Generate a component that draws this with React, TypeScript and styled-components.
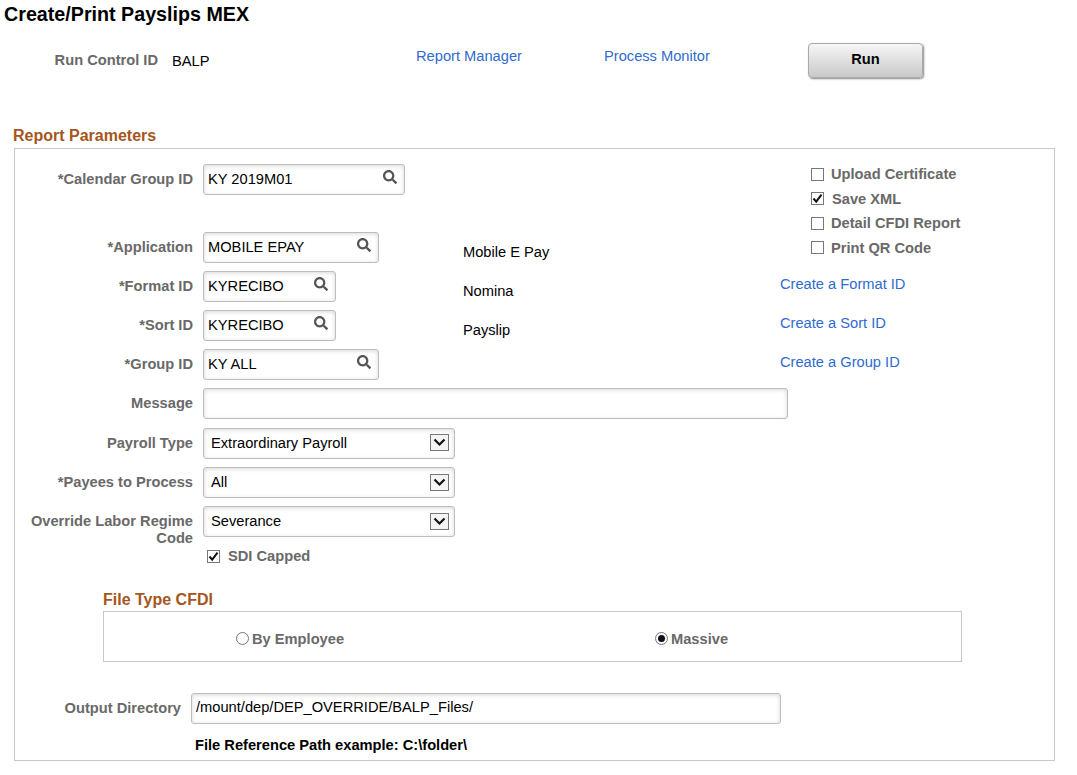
import React, { FC } from "react";
import styled, { createGlobalStyle } from "styled-components";
import { FaSearch } from "react-icons/fa";

const GlobalStyle = createGlobalStyle`
  html, body {
    margin: 0;
    padding: 0;
    background: #ffffff;
  }
  body {
    font-family: "Liberation Sans", Arial, sans-serif;
    font-size: 14.67px;
    color: #000000;
  }
`;

const Page = styled.div`
  width: 1077px;
  height: 775px;
  overflow: hidden;
  padding-top: 4px;
  box-sizing: border-box;
`;

const Title = styled.h1`
  margin: 0 0 19px 4px;
  font-size: 19.7px;
  line-height: 20px;
  font-weight: bold;
`;

const Header = styled.div`
  display: grid;
  grid-template-columns: 158px 258px 188px 204px 115px;
  align-items: center;
  height: 35px;
`;

const HeaderValue = styled.span`
  padding-left: 14px;
`;

const Label = styled.label<{ $top?: boolean }>`
  grid-column: 1;
  font-weight: bold;
  color: #696969;
  text-align: right;
  line-height: 17px;
  ${(p) => p.$top && "align-self: start; padding-top: 7px;"}
`;

const Link = styled.a<{ $up: number }>`
  color: #2f6bce;
  white-space: nowrap;
  padding-bottom: ${(p) => p.$up}px;
`;

const RunButton = styled.button`
  height: 35px;
  width: 115px;
  padding: 0 0 3px;
  border: 1px solid #a9a9a9;
  border-radius: 4px;
  background: linear-gradient(#f6f6f6, #c9c9c9);
  box-shadow: 1px 1px 2px #8a8a8a;
  font: bold 14.67px "Liberation Sans", Arial, sans-serif;
  color: #000000;
`;

const SectionTitle = styled.h2<{ $left: number; $top: number; $bottom: number }>`
  margin: ${(p) => p.$top}px 0 ${(p) => p.$bottom}px ${(p) => p.$left}px;
  font-size: 16px;
  line-height: 18px;
  font-weight: bold;
  color: #a5561c;
`;

const Panel = styled.section`
  margin-left: 14px;
  width: 1041px;
  box-sizing: border-box;
  border: 1px solid #c8c8c8;
  padding: 15px 0 6px;
`;

const Form = styled.div`
  display: grid;
  grid-template-columns: 188px 260px 317px 1fr;
  grid-template-rows: 60px repeat(5, 31px) 32px 31px 31px;
  row-gap: 8px;
  align-items: center;

  & > label {
    padding-right: 10px;
  }
`;

const Field = styled.div<{ $width: number; $select?: boolean }>`
  display: flex;
  align-items: center;
  justify-content: space-between;
  box-sizing: border-box;
  width: ${(p) => p.$width}px;
  height: 31px;
  padding: 0 ${(p) => (p.$select ? 5 : 7)}px ${(p) => (p.$select ? 1 : 2)}px ${(p) => (p.$select ? 7 : 4)}px;
  border: 1px solid #bdbdbd;
  border-radius: 3px;
  background: #ffffff;
  box-shadow: inset 0 1px 4px rgba(0, 0, 0, 0.16);
  white-space: nowrap;
`;

const FirstRowCell = styled.div`
  align-self: start;
`;

const Description = styled.div`
  padding-top: 9px;
`;

const SearchIcon = styled(FaSearch)`
  width: 14px;
  height: 14px;
  margin-bottom: 4px;
  color: #555555;
`;

const ArrowBox = styled.span`
  display: flex;
  align-items: center;
  justify-content: center;
  width: 19px;
  height: 17px;
  box-sizing: border-box;
  border: 1px solid #777777;
  background: #f4f4f4;
`;

const CheckList = styled.div`
  grid-column: 4;
  grid-row: 1 / span 2;
  align-self: start;
  margin-top: -2px;
  padding-left: 31px;
`;

const CheckRow = styled.div<{ $inset?: number; $checked?: boolean }>`
  display: flex;
  align-items: center;
  gap: ${(p) => (p.$checked ? 8 : 7)}px;
  height: 24.5px;
  padding-left: ${(p) => p.$inset ?? 0}px;
`;

const BoxMark = styled.span`
  display: flex;
  align-items: center;
  justify-content: center;
  flex: none;
  width: 13px;
  height: 13px;
  box-sizing: border-box;
  border: 1px solid #777777;
  background: #ffffff;
`;

const CheckText = styled.span`
  font-weight: bold;
  color: #696969;
`;

const SdiCell = styled.div`
  grid-column: 2;
  margin-top: -1px;
`;

const FileType = styled.div`
  margin: 22px 0 31px 88px;
`;

const RadioBox = styled.div`
  display: grid;
  grid-template-columns: 419px 1fr;
  align-items: center;
  width: 859px;
  height: 51px;
  box-sizing: border-box;
  padding: 6px 0 0 132px;
  border: 1px solid #c8c8c8;
`;

const RadioOption = styled.div`
  display: flex;
  align-items: center;
  gap: 3px;
`;

const RadioMark = styled.span<{ $on?: boolean }>`
  display: flex;
  align-items: center;
  justify-content: center;
  width: 13px;
  height: 13px;
  margin-bottom: 2px;
  box-sizing: border-box;
  border: 1px solid #777777;
  border-radius: 50%;
  &::after {
    content: "";
    display: ${(p) => (p.$on ? "block" : "none")};
    width: 7px;
    height: 7px;
    border-radius: 50%;
    background: #111111;
  }
`;

const OutputRow = styled.div`
  display: grid;
  grid-template-columns: 166px auto;
  column-gap: 10px;
  align-items: center;
  justify-content: start;
`;

const PathHint = styled.div`
  margin: 12px 0 0 180px;
  font-weight: bold;
  line-height: 18px;
`;

const Check: FC<{ label: string; checked?: boolean; inset?: number }> = ({ label, checked, inset }) => (
  <CheckRow $inset={inset} $checked={checked}>
    <BoxMark>
      {checked && (
        <svg width="11" height="11" viewBox="0 0 11 11">
          <path d="M1.5 5.5 L4.2 8.6 L9.5 1.6" fill="none" stroke="#111" strokeWidth="2" />
        </svg>
      )}
    </BoxMark>
    <CheckText>{label}</CheckText>
  </CheckRow>
);

const Lookup: FC<{ value: string; width: number }> = ({ value, width }) => (
  <Field $width={width}>
    <span>{value}</span>
    <SearchIcon />
  </Field>
);

const Select: FC<{ value: string }> = ({ value }) => (
  <Field $width={252} $select>
    <span>{value}</span>
    <ArrowBox>
      <svg width="13" height="9" viewBox="0 0 13 9">
        <path d="M1.5 1.5 L6.5 6.5 L11.5 1.5" fill="none" stroke="#111" strokeWidth="2.2" />
      </svg>
    </ArrowBox>
  </Field>
);

export default function App() {
  return (
    <Page>
      <GlobalStyle />
      <Title>Create/Print Payslips MEX</Title>

      <Header>
        <Label as="span">Run Control ID</Label>
        <HeaderValue>BALP</HeaderValue>
        <Link $up={9}>Report Manager</Link>
        <Link $up={9}>Process Monitor</Link>
        <RunButton>Run</RunButton>
      </Header>

      <SectionTitle $left={13} $top={49} $bottom={3}>
        Report Parameters
      </SectionTitle>

      <Panel>
        <Form>
          <Label $top>*Calendar Group ID</Label>
          <FirstRowCell>
            <Lookup value="KY 2019M01" width={202} />
          </FirstRowCell>
          <CheckList>
            <Check label="Upload Certificate" />
            <Check label="Save XML" checked />
            <Check label="Detail CFDI Report" />
            <Check label="Print QR Code" />
          </CheckList>

          <Label>*Application</Label>
          <Lookup value="MOBILE EPAY" width={176} />
          <Description>Mobile E Pay</Description>

          <Label>*Format ID</Label>
          <Lookup value="KYRECIBO" width={133} />
          <Description>Nomina</Description>
          <Link $up={5}>Create a Format ID</Link>

          <Label>*Sort ID</Label>
          <Lookup value="KYRECIBO" width={133} />
          <Description>Payslip</Description>
          <Link $up={5}>Create a Sort ID</Link>

          <Label>*Group ID</Label>
          <Lookup value="KY ALL" width={176} />
          <span />
          <Link $up={5}>Create a Group ID</Link>

          <Label>Message</Label>
          <Field $width={585} />

          <Label>Payroll Type</Label>
          <Select value="Extraordinary Payroll" />

          <Label>*Payees to Process</Label>
          <Select value="All" />

          <Label $top>Override Labor Regime Code</Label>
          <Select value="Severance" />

          <SdiCell>
            <Check label="SDI Capped" checked inset={4} />
          </SdiCell>
        </Form>

        <FileType>
          <SectionTitle $left={0} $top={0} $bottom={2}>
            File Type CFDI
          </SectionTitle>
          <RadioBox>
            <RadioOption>
              <RadioMark />
              <CheckText>By Employee</CheckText>
            </RadioOption>
            <RadioOption>
              <RadioMark $on />
              <CheckText>Massive</CheckText>
            </RadioOption>
          </RadioBox>
        </FileType>

        <OutputRow>
          <Label>Output Directory</Label>
          <Field $width={590}>/mount/dep/DEP_OVERRIDE/BALP_Files/</Field>
        </OutputRow>
        <PathHint>File Reference Path example: C:\folder\</PathHint>
      </Panel>
    </Page>
  );
}
